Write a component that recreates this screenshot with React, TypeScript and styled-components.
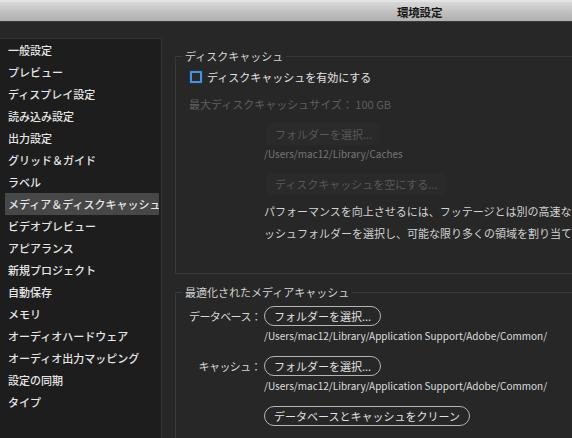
import React from "react";
import styled, { createGlobalStyle } from "styled-components";

const Global = createGlobalStyle`
  html, body { margin: 0; padding: 0; background: #272727; overflow: hidden; }
  body { font-family: "Noto Sans CJK JP", "Noto Sans", sans-serif; -webkit-font-smoothing: antialiased; }
  * { box-sizing: border-box; }
`;

const Window = styled.div`
  width: 572px;
  height: 438px;
  display: flex;
  flex-direction: column;
  overflow: hidden;
`;

const TitleBar = styled.div`
  height: 22px;
  flex: none;
  display: flex;
  align-items: center;
  padding-left: 397px;
  background: linear-gradient(#d8d8d8 0px, #d2d2d2 3px, #c0c0c0 10px, #acacac 21px);
  border-bottom: 1px solid #3a3a3a;
  border-top: 2px solid #e4e4e4;
`;

const Title = styled.span`
  font-size: 11.5px;
  font-weight: 700;
  color: #151515;
  letter-spacing: -0.2px;
`;

const Body = styled.div`
  flex: 1;
  display: flex;
  align-items: flex-start;
  padding-top: 16px;
  background: #272727;
  min-height: 0;
`;

const Sidebar = styled.ul`
  list-style: none;
  margin: 0;
  width: 162px;
  height: 420px;
  flex: none;
  padding: 0 2px 0 5px;
  background: #1d1d1d;
  border-top: 1px solid #333;
  border-right: 1px solid #363636;
`;

const Item = styled.li<{ $selected?: boolean }>`
  height: 22px;
  line-height: 22px;
  padding-left: 3px;
  font-size: 11px;
  font-weight: 500;
  color: #e6e6e6;
  white-space: nowrap;
  overflow: hidden;
  background: ${(p) => (p.$selected ? "#474747" : "transparent")};
`;

const Main = styled.div`
  flex: none;
  width: 700px;
  padding-left: 13px;
  padding-top: 10px;
  display: flex;
  flex-direction: column;
  gap: 10px;
`;

const Group = styled.fieldset<{ $bottom: number }>`
  margin: 0;
  padding: 0 0 ${(p) => p.$bottom}px 13px;
  border: 1px solid #393939;
  border-radius: 1px;
  min-width: 0;
`;

const Legend = styled.legend`
  margin-left: -7px;
  padding: 0 3px;
  height: 16px;
  line-height: 16px;
  font-size: 11px;
  color: #d4d4d4;
`;

const CheckRow = styled.label`
  margin-top: 4px;
  height: 18px;
  display: flex;
  align-items: center;
  gap: 5px;
  font-size: 11px;
  color: #e2e2e2;
`;

const Box = styled.span`
  width: 12px;
  height: 12px;
  margin-left: 1px;
  border: 2px solid #4393e2;
  border-radius: 1px;
  background: #2a2a2a;
  box-shadow: 0 0 1px #2f7fd0;
`;

const Muted = styled.div`
  margin-top: 9px;
  height: 18px;
  line-height: 18px;
  font-size: 11px;
  color: #5f5f5f;
  white-space: nowrap;
`;

const Indent = styled.div`
  padding-left: 75px;
  display: flex;
  flex-direction: column;
  align-items: flex-start;
`;

const DisabledButton = styled.div<{ $top: number }>`
  margin: ${(p) => p.$top}px 0 0 3px;
  height: 22px;
  line-height: 22px;
  padding: 0 8px;
  font-size: 11px;
  color: #585858;
  background: #2a2a2a;
  border-radius: 3px;
  white-space: nowrap;
`;

const Path = styled.div<{ $muted?: boolean; $top: number }>`
  margin-top: ${(p) => p.$top}px;
  height: 16px;
  line-height: 16px;
  font-size: 10px;
  color: ${(p) => (p.$muted ? "#767676" : "#dedede")};
  white-space: nowrap;
`;

const Para = styled.div`
  margin-top: 5px;
  font-size: 11px;
  line-height: 22px;
  color: #d2d2d2;
  white-space: nowrap;
`;

const Line = styled.div``;

const FieldRow = styled.div<{ $top: number }>`
  margin-top: ${(p) => p.$top}px;
  display: flex;
  align-items: center;
  height: 20px;
`;

const Label = styled.span`
  width: 75px;
  padding-right: 3px;
  text-align: right;
  font-size: 11px;
  color: #d8d8d8;
  white-space: nowrap;
  letter-spacing: -0.6px;
`;

const PillButton = styled.button`
  height: 20px;
  padding: 0 9px;
  margin: 0;
  font-family: inherit;
  font-size: 11px;
  color: #e2e2e2;
  background: transparent;
  border: 1.5px solid #b4b4b4;
  border-radius: 10px;
  white-space: nowrap;
  display: flex;
  align-items: center;
`;

const Offset = styled.div`
  padding-left: 75px;
  display: flex;
  flex-direction: column;
  align-items: flex-start;
`;

const items = [
  "一般設定",
  "プレビュー",
  "ディスプレイ設定",
  "読み込み設定",
  "出力設定",
  "グリッド＆ガイド",
  "ラベル",
  "メディア＆ディスクキャッシュ",
  "ビデオプレビュー",
  "アピアランス",
  "新規プロジェクト",
  "自動保存",
  "メモリ",
  "オーディオハードウェア",
  "オーディオ出力マッピング",
  "設定の同期",
  "タイプ",
];

export default function App() {
  return (
    <>
      <Global />
      <Window>
        <TitleBar>
          <Title>環境設定</Title>
        </TitleBar>
        <Body>
          <Sidebar>
            {items.map((t, i) => (
              <Item key={t} $selected={i === 7}>
                {t}
              </Item>
            ))}
          </Sidebar>
          <Main>
            <Group $bottom={29}>
              <Legend>ディスクキャッシュ</Legend>
              <CheckRow>
                <Box />
                ディスクキャッシュを有効にする
              </CheckRow>
              <Muted>最大ディスクキャッシュサイズ： 100 GB</Muted>
              <Indent>
                <DisabledButton $top={10}>フォルダーを選択...</DisabledButton>
                <Path $muted $top={1}>
                  /Users/mac12/Library/Caches
                </Path>
                <DisabledButton $top={11}>ディスクキャッシュを空にする...</DisabledButton>
                <Para>
                  <Line>パフォーマンスを向上させるには、フッテージとは別の高速なディスクにキャ</Line>
                  <Line>ッシュフォルダーを選択し、可能な限り多くの領域を割り当ててください。</Line>
                </Para>
              </Indent>
            </Group>
            <Group $bottom={20}>
              <Legend>最適化されたメディアキャッシュ</Legend>
              <FieldRow $top={6}>
                <Label>データベース：</Label>
                <PillButton>フォルダーを選択...</PillButton>
              </FieldRow>
              <Offset>
                <Path $top={2}>/Users/mac12/Library/Application Support/Adobe/Common/</Path>
              </Offset>
              <FieldRow $top={12}>
                <Label>キャッシュ：</Label>
                <PillButton>フォルダーを選択...</PillButton>
              </FieldRow>
              <Offset>
                <Path $top={2}>/Users/mac12/Library/Application Support/Adobe/Common/</Path>
              </Offset>
              <FieldRow $top={12}>
                <Label />
                <PillButton>データベースとキャッシュをクリーン</PillButton>
              </FieldRow>
            </Group>
          </Main>
        </Body>
      </Window>
    </>
  );
}
